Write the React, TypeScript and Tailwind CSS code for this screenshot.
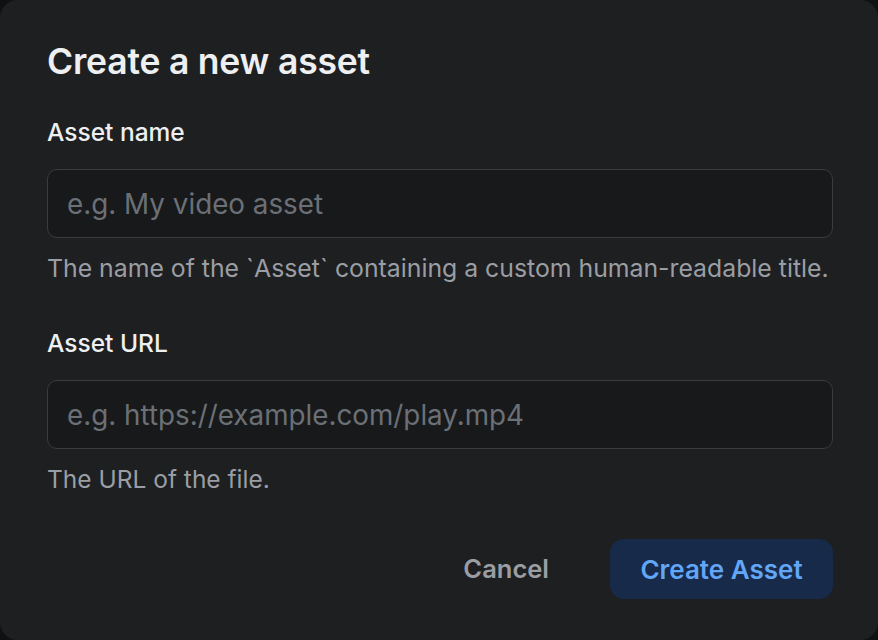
export default function App() {
  return (
    <div className="h-[640px] w-[878px] bg-[#101113]" style={{ fontFamily: 'Inter, "Noto Sans", sans-serif' }}>
      <div className="flex h-full flex-col rounded-[18px] bg-[#1e1f21] pl-[47px] pr-[45px] pt-[40px]">
        <h2 className="text-[35.5px] font-semibold leading-[44px] tracking-[-0.2px] text-[#eeeff1]">Create a new asset</h2>

        <label className="mt-[33px] text-[24.5px] font-medium leading-[30px] text-[#eeeff1]">Asset name</label>
        <input
          type="text"
          placeholder="e.g. My video asset"
          className="mt-[22px] h-[69px] w-full rounded-[10px] border border-[#3b3c3f] bg-[#18191b] px-[19px] text-[27.8px] text-white placeholder-[#6b7076] outline-none"
        />
        <p className="mt-[15px] text-[24.8px] leading-[30px] text-[#9a9ea4]">
          The name of the `Asset` containing a custom human-readable title.
        </p>

        <label className="mt-[45px] text-[24.5px] font-medium leading-[30px] text-[#eeeff1]">Asset URL</label>
        <input
          type="text"
          placeholder="e.g. https://example.com/play.mp4"
          className="mt-[22px] h-[69px] w-full rounded-[10px] border border-[#3b3c3f] bg-[#18191b] px-[19px] text-[27.8px] text-white placeholder-[#6b7076] outline-none"
        />
        <p className="mt-[15px] text-[24.5px] leading-[30px] text-[#9a9ea4]">The URL of the file.</p>

        <div className="mt-[45px] flex items-center justify-end gap-[61px]">
          <button className="text-[25.5px] font-semibold text-[#9a9ea4]">Cancel</button>
          <button className="h-[60px] w-[223px] rounded-[14px] bg-[#172a49] text-[26px] font-semibold text-[#62a6f8]">
            Create Asset
          </button>
        </div>
      </div>
    </div>
  );
}
